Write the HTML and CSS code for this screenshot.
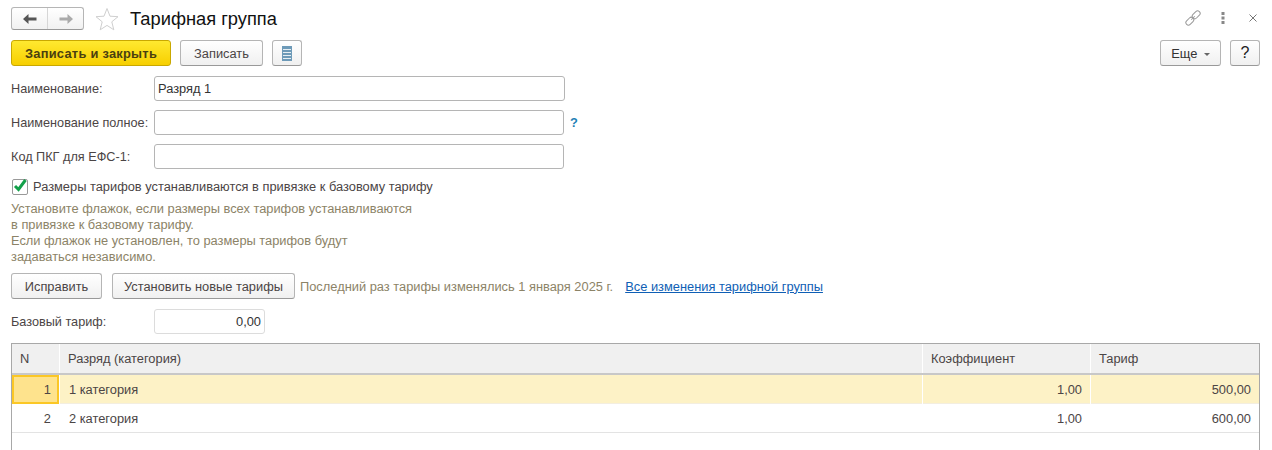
FILE: index.html
```html
<!DOCTYPE html>
<html lang="ru">
<head>
  <meta charset="UTF-8">
  <title>Тарифная группа</title>
  <link rel="stylesheet" href="styles.css">
</head>
<body>

<header class="title-bar">
  <div class="nav-group">
    <span class="nav-btn">
      <svg width="16" height="12" viewBox="0 0 16 12"><path d="M1 6l5.500-5v3.500h8v3h-8v3.500z" fill="#555"/></svg>
    </span>
    <span class="nav-btn">
      <svg width="16" height="12" viewBox="0 0 16 12"><path d="M15 6l-5.500-5v3.500h-8v3h8v3.500z" fill="#aaa"/></svg>
    </span>
  </div>
  <svg class="star" width="24" height="24" viewBox="0 0 24 24"><path d="M12 1.500l3 7.700 8 .5-6.200 5.100 2 8-6.800-4.400-6.800 4.400 2-8L1 9.700l8-.5z" fill="#fff" stroke="#cfcfcf"/></svg>
  <h1 class="title">Тарифная группа</h1>
  <div class="title-icons">
    <svg class="icon-link" width="16" height="16" viewBox="0 0 16 16" fill="none" stroke="#999" stroke-width="1"><g transform="rotate(-45 8 8)"><rect x="-1" y="5.500" width="9" height="5" rx="2.500"/><rect x="8" y="5.500" width="9" height="5" rx="2.500"/><path d="M5.500 8h5"/></g></svg>
    <svg class="icon-more" width="4" height="12" viewBox="0 0 4 12" fill="#888"><rect x="0.500" y="0" width="3" height="3"/><rect x="0.500" y="4.500" width="3" height="3"/><rect x="0.500" y="9" width="3" height="3"/></svg>
    <svg class="icon-close" width="8" height="8" viewBox="0 0 8 8" stroke="#777" stroke-width="1"><path d="M.5.500l7 7M7.500.500l-7 7"/></svg>
  </div>
</header>

<div class="toolbar">
  <button class="btn btn-primary">Записать и закрыть</button>
  <button class="btn btn-save">Записать</button>
  <button class="btn btn-icon">
    <svg width="10" height="15" viewBox="0 0 10 15"><rect width="10" height="15" fill="#6d9ab8"/><path d="M1 3.500h8M1 6.500h8M1 9.500h8M1 12.500h8" stroke="#e6eef3" stroke-width="1"/></svg>
  </button>
  <div class="toolbar-right">
    <button class="btn btn-more">Еще <i class="caret"></i></button>
    <button class="btn btn-help">?</button>
  </div>
</div>

<div class="field-row">
  <label class="field-label">Наименование:</label>
  <div class="input input-first">Разряд 1</div>
</div>
<div class="field-row">
  <label class="field-label">Наименование полное:</label>
  <div class="input"></div>
  <span class="hint-mark">?</span>
</div>
<div class="field-row">
  <label class="field-label">Код ПКГ для ЕФС-1:</label>
  <div class="input"></div>
</div>

<div class="check-row">
  <span class="checkbox">
    <svg width="16" height="16" viewBox="0 0 16 16"><path d="M3 8l3.500 3.500 7-9.500" fill="none" stroke="#12a04a" stroke-width="3"/></svg>
  </span>
  <span>Размеры тарифов устанавливаются в привязке к базовому тарифу</span>
</div>
<p class="note">Установите флажок, если размеры всех тарифов устанавливаются<br>в привязке к базовому тарифу.<br>Если флажок не установлен, то размеры тарифов будут<br>задаваться независимо.</p>

<div class="action-row">
  <button class="btn btn-fix">Исправить</button>
  <button class="btn btn-new">Установить новые тарифы</button>
  <span class="note-inline">Последний раз тарифы изменялись 1 января 2025 г.</span>
  <a class="link" href="#">Все изменения тарифной группы</a>
</div>

<div class="field-row base-row">
  <label class="field-label">Базовый тариф:</label>
  <div class="input input-number">0,00</div>
</div>

<div class="grid">
  <div class="grid-row grid-head">
    <div class="cell">N</div>
    <div class="cell">Разряд (категория)</div>
    <div class="cell">Коэффициент</div>
    <div class="cell">Тариф</div>
  </div>
  <div class="grid-row grid-current">
    <div class="cell num cell-focus">1</div>
    <div class="cell cell-name">1 категория</div>
    <div class="cell num">1,00</div>
    <div class="cell num">500,00</div>
  </div>
  <div class="grid-row">
    <div class="cell num">2</div>
    <div class="cell cell-name">2 категория</div>
    <div class="cell num">1,00</div>
    <div class="cell num">600,00</div>
  </div>
</div>

</body>
</html>
```

FILE: styles.css
```css
html, body {
    height: 450px;
    overflow: hidden;
}
body {
    margin: 0;
    padding: 0 12px 0 11px;
    background: #fff;
    color: #4b4545;
    font-family: "Liberation Sans", Arial, sans-serif;
    font-size: 12.85px;
}
.title-bar {
    display: flex;
    align-items: center;
    height: 23px;
    padding-top: 7px;
}
.nav-group {
    display: flex;
    width: 73px;
    height: 23px;
    box-sizing: border-box;
    border: 1px solid #b5b5b5;
    border-bottom-color: #999;
    border-radius: 3px;
    background: linear-gradient(#fff, #f1f1f1);
}
.nav-btn {
    flex: 1;
    display: flex;
    align-items: center;
    justify-content: center;
}
.nav-btn + .nav-btn {
    border-left: 1px solid #d6d6d6;
}
.star {
    margin-left: 11px;
}
.title {
    margin: 1px 0 0 11px;
    font-size: 18.3px;
    font-weight: normal;
    color: #111;
}
.title-icons {
    margin-left: auto;
    display: flex;
    align-items: center;
    padding-right: 3px;
    margin-top: -2px;
}
.icon-more {
    margin-left: 20px;
}
.icon-close {
    margin-left: 24px;
}
.toolbar {
    display: flex;
    align-items: center;
    gap: 9px;
    margin-top: 10px;
    height: 26px;
}
.toolbar-right {
    margin-left: auto;
    display: flex;
    gap: 9px;
}
.btn {
    height: 26px;
    padding: 0;
    box-sizing: border-box;
    border: 1px solid #b5b5b5;
    border-bottom-color: #999;
    border-radius: 3px;
    background: linear-gradient(#fff, #f0f0f0);
    color: #4b4545;
    font-family: inherit;
    font-size: 12.85px;
}
.btn-primary {
    width: 160px;
    border-color: #c9a800;
    background: linear-gradient(#ffe930, #f7cf00);
    color: #4a3f10;
    font-weight: bold;
    letter-spacing: 0.27px;
}
.btn-save { width: 83px; }
.btn-icon { width: 30px; line-height: 0; }
.btn-more { width: 61px; color: #333; }
.btn-help { width: 30px; color: #222; font-size: 16px; }
.btn-fix { width: 91px; }
.btn-new { width: 183px; }
.caret {
    display: inline-block;
    margin-left: 3px;
    vertical-align: middle;
    border: 3px solid transparent;
    border-top-color: #666;
    border-bottom: 0;
}
.field-row {
    display: flex;
    align-items: center;
    height: 25px;
    margin-top: 9px;
}
.toolbar + .field-row {
    margin-top: 10px;
}
.field-label {
    width: 143px;
    flex: none;
    white-space: nowrap;
    font-size: 12.7px;
}
.input {
    width: 410px;
    height: 25px;
    box-sizing: border-box;
    padding: 0 3px;
    border: 1px solid #b5b5b5;
    border-radius: 3px;
    background: #fff;
    color: #333;
    line-height: 23px;
}
.input-first {
    width: 411px;
}
.input-number {
    width: 111px;
    border-color: #dcdcdc;
    text-align: right;
}
.hint-mark {
    margin-left: 6px;
    color: #1f7fb5;
    font-weight: bold;
}
.check-row {
    display: flex;
    align-items: center;
    gap: 5px;
    height: 17px;
    margin: 9px 0 0 1px;
}
.checkbox {
    width: 16px;
    height: 16px;
    box-sizing: border-box;
    border: 1px solid #999;
    border-radius: 2px;
    display: flex;
    align-items: center;
    justify-content: center;
}
.checkbox svg {
    flex: none;
    margin-top: -2px;
}
.note {
    margin: 6px 0 0;
    color: #8c8367;
    line-height: 16px;
}
.action-row {
    display: flex;
    align-items: center;
    gap: 5px;
    margin-top: 8px;
}
.action-row .btn-fix {
    margin-right: 5px;
}
.note-inline {
    color: #8c8367;
}
.link {
    margin-left: 7px;
    color: #0f5fb5;
}
.base-row {
    margin-top: 10px;
}
.grid {
    margin-top: 9px;
    height: 120px;
    box-sizing: border-box;
    border: 1px solid #a8a8a8;
    border-bottom: 0;
}
.grid-row {
    display: grid;
    grid-template-columns: 47px 863px 168px 1fr;
    height: 29px;
    box-sizing: border-box;
    border-bottom: 1px solid #e3e3e3;
    line-height: 29px;
}
.grid-head {
    height: 31px;
    background: #f0f0f0;
    border-bottom: 2px solid #c8c8c8;
    line-height: 29px;
}
.cell {
    padding: 0 8px;
    border-left: 1px solid transparent;
    white-space: nowrap;
}
.cell:first-child {
    border-left: 0;
}
.cell-name {
    padding-left: 9px;
}
.grid-head .cell {
    border-left-color: #fff;
}
.grid-head .cell:first-child {
    padding-left: 8px;
}
.grid-current {
    background: #fdf2c6;
    border-bottom-color: #f3eee0;
}
.grid-current .cell {
    border-left-color: #fff;
}
.grid-current .cell:first-child {
    border-left: 0;
}
.num {
    text-align: right;
}
.cell-focus {
    background: #fee38d;
    box-shadow: inset 0 0 0 2px #fbc725;
}
```
